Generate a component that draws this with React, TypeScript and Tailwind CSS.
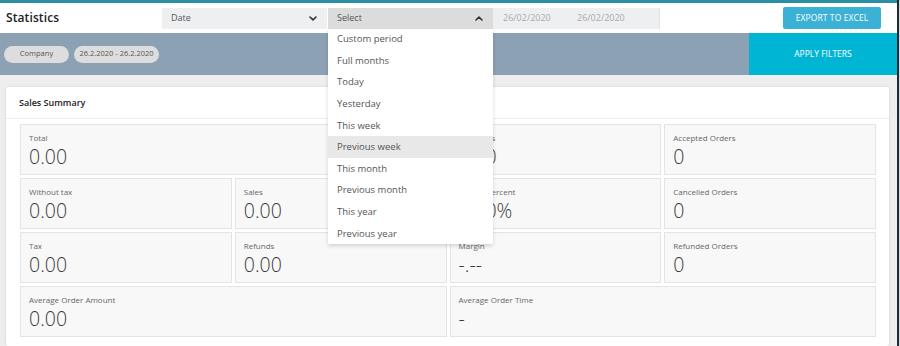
import React from "react";

const font = { fontFamily: '"Open Sans", "Liberation Sans", sans-serif' };

function ChevronDown() {
  return (
    <svg width="8" height="5" viewBox="0 0 8 5" className="shrink-0">
      <path d="M1 1 L4 3.9 L7 1" fill="none" stroke="#333" strokeWidth="1.6" strokeLinecap="round" strokeLinejoin="round" />
    </svg>
  );
}
function ChevronUp() {
  return (
    <svg width="8" height="5" viewBox="0 0 8 5" className="shrink-0">
      <path d="M1 4 L4 1.1 L7 4" fill="none" stroke="#333" strokeWidth="1.6" strokeLinecap="round" strokeLinejoin="round" />
    </svg>
  );
}

const options = [
  "Custom period",
  "Full months",
  "Today",
  "Yesterday",
  "This week",
  "Previous week",
  "This month",
  "Previous month",
  "This year",
  "Previous year",
];

function Tile({ label, value, span }: { label: string; value: string; span?: boolean }) {
  return (
    <div
      className={`h-[51px] bg-[#f8f8f8] border border-[#e4e4e4] pl-[8px] pt-[7px] flex flex-col ${span ? "col-span-2" : ""}`}
    >
      <div className="text-[8px] leading-[11px] text-[#666]">{label}</div>
      <div className="text-[19.5px] leading-[27px] text-[#3a3a3a] font-light">{value}</div>
    </div>
  );
}

export default function App() {
  return (
    <div className="w-[900px] h-[346px] overflow-hidden flex bg-white" style={font}>
      <div className="w-[897px] h-full flex flex-col bg-[#eeeeee]">
        <div className="h-[3px] bg-[#2b8ea2]" />
        <div className="h-[30px] bg-white flex items-center">
          <div className="w-[162px] pl-[6px] text-[12px] font-semibold text-[#222] tracking-[0.1px]">Statistics</div>
          <div className="w-[165px] h-[21px] bg-[#eeeff1] flex items-center justify-between pl-[9px] pr-[10px] text-[9px] text-[#555]">
            <span>Date</span>
            <ChevronDown />
          </div>
          <div className="relative ml-[1px] w-[165px] h-[21px]">
            <div className="w-full h-full bg-[#dcdcdc] flex items-center justify-between pl-[9px] pr-[10px] text-[9px] text-[#555]">
              <span>Select</span>
              <ChevronUp />
            </div>
            <div className="absolute left-0 top-[21px] w-[165px] bg-white shadow-[0_2px_4px_rgba(0,0,0,0.15)] z-10">
              {options.map((o) => (
                <div
                  key={o}
                  className={`h-[21.6px] flex items-center pl-[9px] text-[9.5px] text-[#555] ${o === "Previous week" ? "bg-[#e8e8e8]" : ""}`}
                >
                  {o}
                </div>
              ))}
            </div>
          </div>
          <div className="w-[167px] h-[21px] bg-[#eeeff1] border-r border-[#e0e0e0] flex items-center text-[9px] text-[#aaa]">
            <span className="pl-[10px] w-[84px]">26/02/2020</span>
            <span>26/02/2020</span>
          </div>
          <div className="flex-1" />
          <div className="w-[98px] h-[22px] mr-[16px] bg-[#3bb1d6] rounded-[2px] flex items-center justify-center text-white text-[8.5px] tracking-[0.1px]">
            EXPORT TO EXCEL
          </div>
        </div>
        <div className="h-[42px] flex">
          <div className="flex-1 bg-[#8da1b4] flex items-center pl-[4px] gap-[5px]">
            <div className="h-[17px] w-[65px] rounded-full bg-[#dddddd] flex items-center justify-center text-[7.5px] text-[#555]">
              Company
            </div>
            <div className="h-[17px] w-[85px] rounded-full bg-[#dddddd] flex items-center justify-center text-[7.5px] text-[#555]">
              26.2.2020 - 26.2.2020
            </div>
          </div>
          <div className="w-[148px] bg-[#00b5d3] flex items-center justify-center text-white text-[8.5px]">
            APPLY FILTERS
          </div>
        </div>
        <div className="flex-1 pt-[12px] pl-[6px] pr-[8px]">
          <div className="bg-white h-full rounded-[2px] shadow-[0_0_3px_rgba(0,0,0,0.12)]">
            <div className="h-[32px] border-b border-[#ececec] flex items-center pl-[13px] text-[9px] font-semibold text-[#222]">
              Sales Summary
            </div>
            <div className="pl-[14px] pr-[13px] pt-[5px] grid grid-cols-4 gap-[3px]">
              <Tile label="Total" value="0.00" span />
              <Tile label="Discounts" value="0.00" />
              <Tile label="Accepted Orders" value="0" />
              <Tile label="Without tax" value="0.00" />
              <Tile label="Sales" value="0.00" />
              <Tile label="Margin Percent" value="0.00%" />
              <Tile label="Cancelled Orders" value="0" />
              <Tile label="Tax" value="0.00" />
              <Tile label="Refunds" value="0.00" />
              <Tile label="Margin" value="-.--" />
              <Tile label="Refunded Orders" value="0" />
              <Tile label="Average Order Amount" value="0.00" span />
              <Tile label="Average Order Time" value="-" span />
            </div>
          </div>
        </div>
      </div>
      <div className="w-[2px] h-full bg-[#1d2a3a]" />
      <div className="w-[1px] h-full bg-[#d8d8d8]" />
    </div>
  );
}
